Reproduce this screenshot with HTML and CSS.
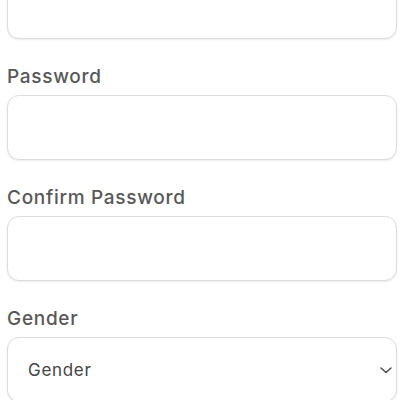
FILE: index.html
```html
<!DOCTYPE html>
<html>
<head>
<meta charset="utf-8">
<link rel="stylesheet" href="styles.css">
</head>
<body>
<form class="form">
  <input class="field first" type="email">
  <label class="label">Password</label>
  <input class="field" type="password">
  <label class="label">Confirm Password</label>
  <input class="field" type="password">
  <label class="label">Gender</label>
  <div class="field select">
    <span class="select-text">Gender</span>
    <svg class="chev" width="12" height="7" viewBox="0 0 12 7"><path d="M1 1l5 4.5L11 1" fill="none" stroke="#444" stroke-width="1.4" stroke-linecap="round" stroke-linejoin="round"/></svg>
  </div>
</form>
</body>
</html>
```
FILE: styles.css
```css
html, body {
  margin: 0;
  padding: 0;
  background: #fff;
  overflow: hidden;
}
.form {
  display: flex;
  flex-direction: column;
  padding-left: 7px;
  width: 390px;
  font-family: "Inter", "Open Sans", sans-serif;
}
.field {
  box-sizing: border-box;
  width: 390px;
  height: 65px;
  margin: 0;
  border: 1px solid #dcdcdc;
  border-radius: 12px;
  box-shadow: 0 1px 2px rgba(0,0,0,0.08);
  background: #fff;
  outline: none;
}
.first {
  margin-top: -26px;
}
.label {
  display: block;
  margin-top: 26px;
  margin-bottom: 6px;
  font-size: 19px;
  line-height: 24px;
  font-weight: 500;
  color: #585858;
  letter-spacing: 0.7px;
}
.select {
  display: flex;
  align-items: center;
  justify-content: space-between;
  padding: 0 4px 0 20px;
}
.select-text {
  font-size: 17px;
  color: #444;
  letter-spacing: 0.7px;
}
.chev {
  margin-top: 1px;
}
```
